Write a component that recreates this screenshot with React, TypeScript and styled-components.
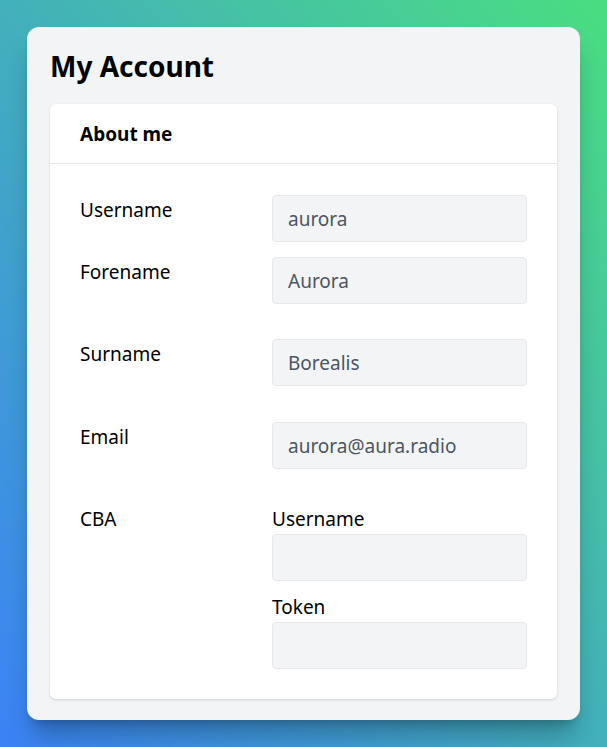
import React from 'react'
import styled, { createGlobalStyle } from 'styled-components'

const GlobalStyle = createGlobalStyle`
  html, body {
    margin: 0;
    padding: 0;
  }
  body {
    font-family: "Noto Sans", "DejaVu Sans", sans-serif;
    color: #000;
  }
  * {
    box-sizing: border-box;
  }
`

const Page = styled.div`
  width: 607px;
  height: 747px;
  padding: 27px;
  background: linear-gradient(to top right, #3b82f6, #4ade80);
`

const Panel = styled.div`
  height: 693px;
  background: #f3f4f6;
  border-radius: 12px;
  padding: 20px 23px 21px;
  box-shadow: 0 20px 25px -5px rgba(0, 0, 0, 0.25), 0 8px 10px -6px rgba(0, 0, 0, 0.2);
  display: flex;
  flex-direction: column;
`

const Title = styled.h1`
  margin: 0 0 19px;
  font-size: 28px;
  line-height: 38px;
  font-weight: 700;
`

const Card = styled.section`
  background: #fff;
  border-radius: 6px;
  box-shadow: 0 1px 3px rgba(0, 0, 0, 0.12), 0 1px 2px -1px rgba(0, 0, 0, 0.1);
  flex: 1;
`

const CardHeader = styled.header`
  height: 60px;
  padding: 0 30px;
  display: flex;
  align-items: center;
  border-bottom: 1px solid #e5e7eb;
  font-size: 19px;
  font-weight: 700;
`

const CardBody = styled.div`
  padding: 31px 30px 30px;
`

const Row = styled.div<{ $gap?: number }>`
  display: grid;
  grid-template-columns: 192px 1fr;
  align-items: start;
  margin-top: ${(p) => p.$gap ?? 0}px;
`

const Label = styled.div<{ $top?: number }>`
  font-size: 19px;
  line-height: 24px;
  padding-top: ${(p) => p.$top ?? 3}px;
`

const Field = styled.div`
  display: flex;
  flex-direction: column;
`

const SubLabel = styled.div<{ $gap?: number }>`
  font-size: 19px;
  line-height: 24px;
  margin-top: ${(p) => p.$gap ?? 0}px;
  margin-bottom: 3px;
`

const Input = styled.input`
  display: block;
  width: 100%;
  height: 47px;
  padding: 0 15px;
  border: 1px solid #e5e7eb;
  border-radius: 4px;
  background: #f3f4f6;
  color: #4b5563;
  font-family: inherit;
  font-size: 19px;
  outline: none;
`

export default function App() {
  return (
    <>
      <GlobalStyle />
      <Page>
        <Panel>
          <Title>My Account</Title>
          <Card>
            <CardHeader>About me</CardHeader>
            <CardBody>
              <Row>
                <Label>Username</Label>
                <Input readOnly value="aurora" />
              </Row>
              <Row $gap={15}>
                <Label>Forename</Label>
                <Input readOnly value="Aurora" />
              </Row>
              <Row $gap={35}>
                <Label>Surname</Label>
                <Input readOnly value="Borealis" />
              </Row>
              <Row $gap={36}>
                <Label>Email</Label>
                <Input readOnly value="aurora@aura.radio" />
              </Row>
              <Row $gap={38}>
                <Label $top={0}>CBA</Label>
                <Field>
                  <SubLabel>Username</SubLabel>
                  <Input readOnly />
                  <SubLabel $gap={14}>Token</SubLabel>
                  <Input readOnly />
                </Field>
              </Row>
            </CardBody>
          </Card>
        </Panel>
      </Page>
    </>
  )
}
